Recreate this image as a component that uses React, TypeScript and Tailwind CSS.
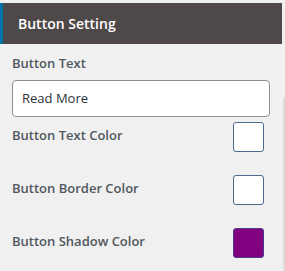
import React from 'react';

const font = { fontFamily: '"Open Sans", "Noto Sans", sans-serif' };

interface ColorRowProps {
  label: string;
  color: string;
  border: string;
}

const ColorRow: React.FC<ColorRowProps> = ({ label, color, border }) => (
  <div className="flex items-start justify-between h-[53px]">
    <span className="text-[13px] leading-[20px] font-semibold text-[#50575e] mt-[3px]">{label}</span>
    <div
      className={`w-[31px] h-[30px] rounded-[3px] border mr-[6px] ${border} ${color}`}
    />
  </div>
);

export default function App() {
  return (
    <div className="w-[285px] h-[271px] bg-[#f0f0f1] flex overflow-hidden" style={font}>
      <div className="w-[282px] pt-[3px]">
        {/* Header */}
        <div className="h-[41px] bg-[#4f4848] border-l-[3px] border-[#0073aa] flex items-center pl-[15px]">
          <span className="text-[14px] font-semibold text-white">Button Setting</span>
        </div>

        {/* Settings */}
        <div className="px-3 pt-[9px]">
          <div className="text-[13px] leading-[20px] font-semibold text-[#50575e]">Button Text</div>
          <div className="mt-[7px] w-[258px] h-[37px] border border-[#8c8f94] rounded-[4px] bg-white flex items-center px-[9px] text-[13px] text-[#2c3338]">
            Read More
          </div>
          <div className="mt-[5px]">
            <ColorRow label="Button Text Color" color="bg-white" border="border-[#4a6b8c]" />
            <ColorRow label="Button Border Color" color="bg-white" border="border-[#4a6b8c]" />
            <ColorRow label="Button Shadow Color" color="bg-[#800080]" border="border-[#4b3a8a]" />
          </div>
        </div>
      </div>
      <div className="w-[3px] flex justify-end pt-[97px]">
        <div className="w-[2px] bg-[#dcdcde]" />
      </div>
    </div>
  );
}
